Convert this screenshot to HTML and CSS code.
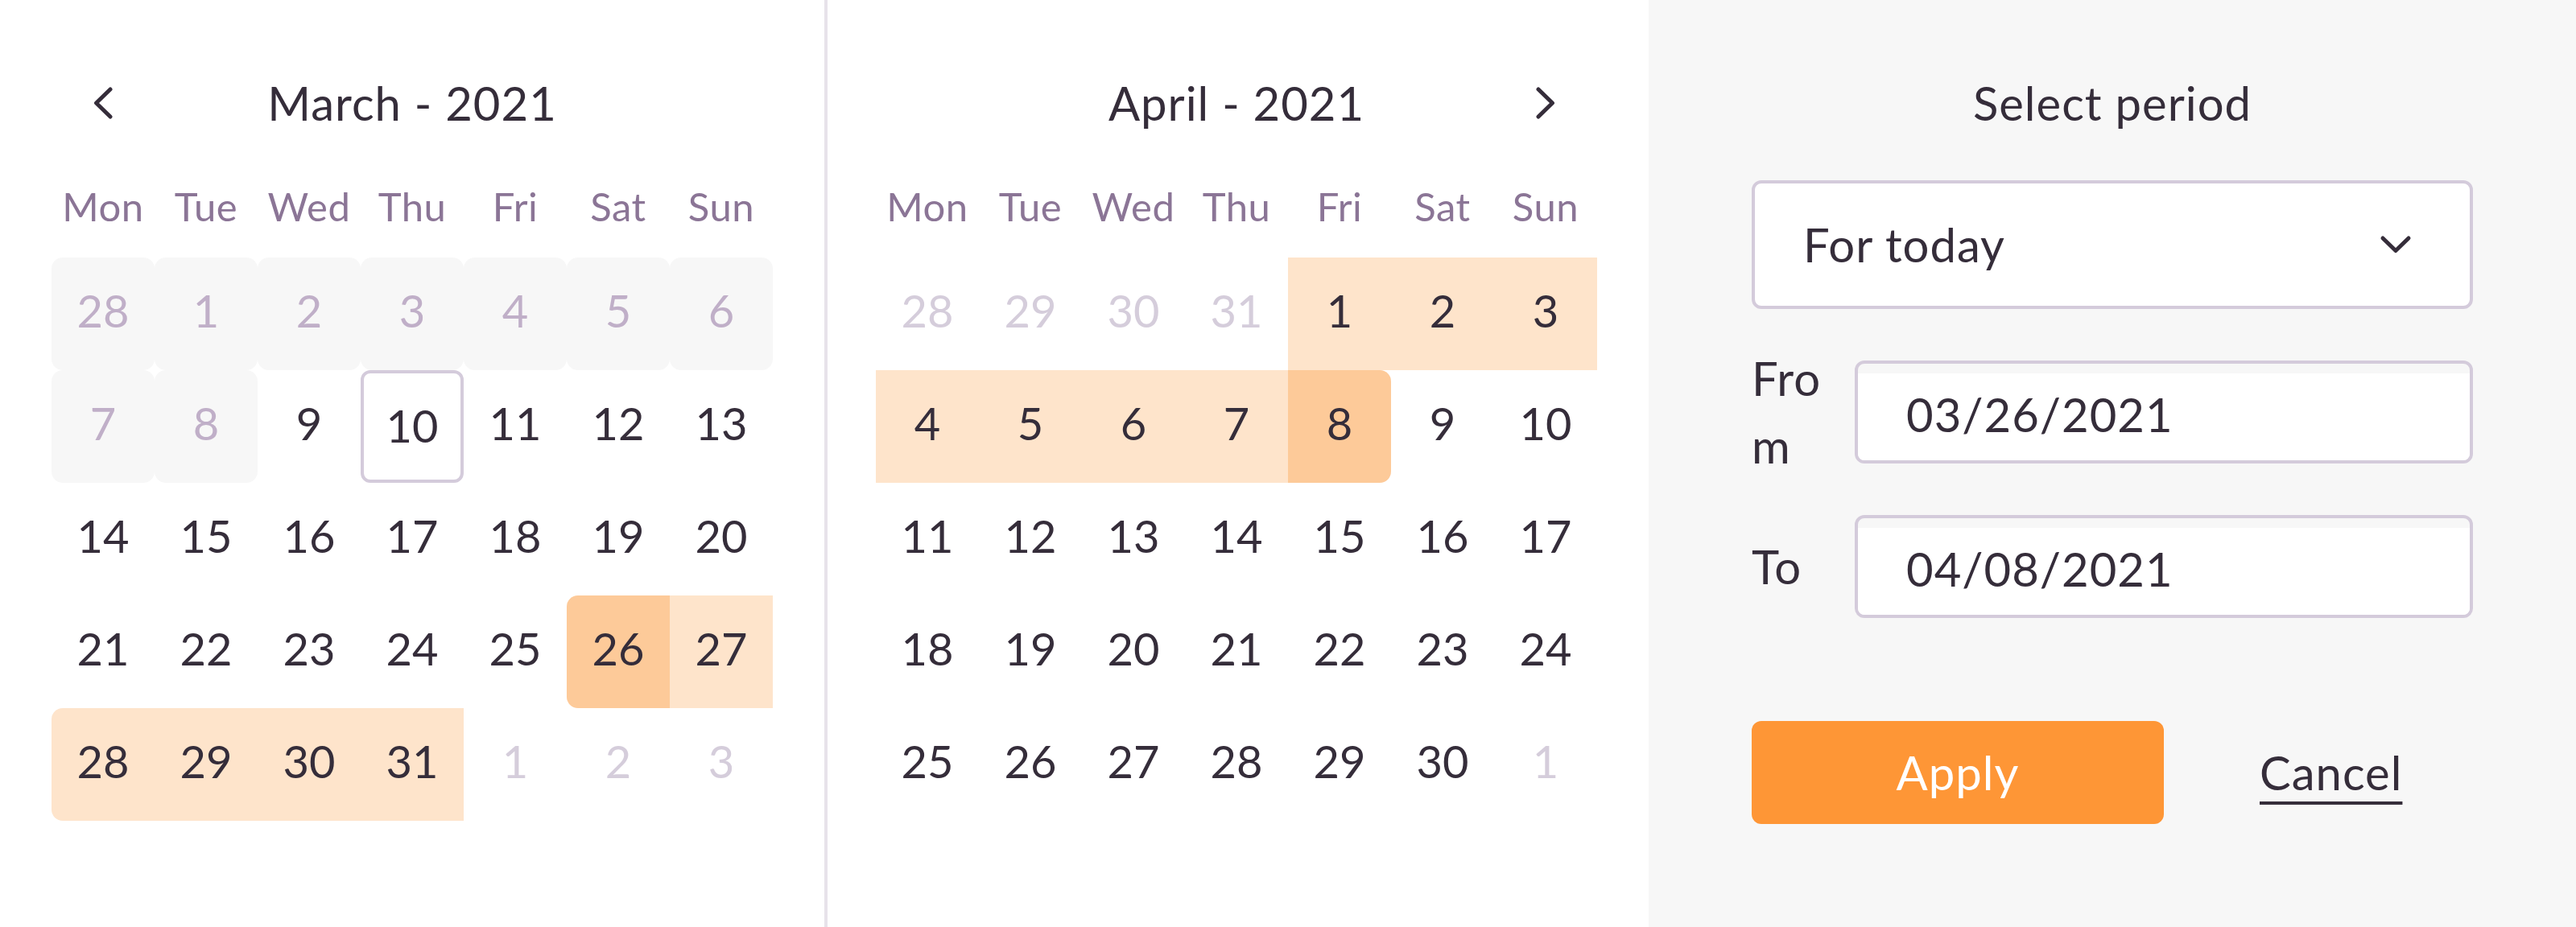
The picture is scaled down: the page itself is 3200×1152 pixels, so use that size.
FILE: index.html
```html
<!DOCTYPE html>
<html lang="en">
<head>
<meta charset="utf-8">
<title>Date range picker</title>
<link rel="stylesheet" href="styles.css">
</head>
<body>
<div class="picker">
  <section class="cal">
    <div class="cal-head">
      <span class="nav">
        <svg width="24" height="40" viewBox="0 0 24 40"><path d="M21 3 L3.5 20 L21 37" fill="none" stroke="#352d3a" stroke-width="5" stroke-linecap="round" stroke-linejoin="round"/></svg>
      </span>
      <h2 class="cal-title">March - 2021</h2>
      <span class="nav"></span>
    </div>
    <div class="weekdays">
      <span class="weekday">Mon</span><span class="weekday">Tue</span><span class="weekday">Wed</span><span class="weekday">Thu</span><span class="weekday">Fri</span><span class="weekday">Sat</span><span class="weekday">Sun</span>
    </div>
    <div class="days">
      <span class="day day--disabled">28</span>
      <span class="day day--disabled">1</span>
      <span class="day day--disabled">2</span>
      <span class="day day--disabled">3</span>
      <span class="day day--disabled">4</span>
      <span class="day day--disabled">5</span>
      <span class="day day--disabled">6</span>

      <span class="day day--disabled">7</span>
      <span class="day day--disabled">8</span>
      <span class="day">9</span>
      <span class="day day--today">10</span>
      <span class="day">11</span>
      <span class="day">12</span>
      <span class="day">13</span>

      <span class="day">14</span>
      <span class="day">15</span>
      <span class="day">16</span>
      <span class="day">17</span>
      <span class="day">18</span>
      <span class="day">19</span>
      <span class="day">20</span>

      <span class="day">21</span>
      <span class="day">22</span>
      <span class="day">23</span>
      <span class="day">24</span>
      <span class="day">25</span>
      <span class="day day--edge round-left">26</span>
      <span class="day day--range">27</span>

      <span class="day day--range round-left">28</span>
      <span class="day day--range">29</span>
      <span class="day day--range">30</span>
      <span class="day day--range">31</span>
      <span class="day day--muted">1</span>
      <span class="day day--muted">2</span>
      <span class="day day--muted">3</span>
    </div>
  </section>

  <section class="cal cal--second">
    <div class="cal-head">
      <span class="nav"></span>
      <h2 class="cal-title">April - 2021</h2>
      <span class="nav">
        <svg width="24" height="40" viewBox="0 0 24 40"><path d="M3 3 L20.5 20 L3 37" fill="none" stroke="#352d3a" stroke-width="5" stroke-linecap="round" stroke-linejoin="round"/></svg>
      </span>
    </div>
    <div class="weekdays">
      <span class="weekday">Mon</span><span class="weekday">Tue</span><span class="weekday">Wed</span><span class="weekday">Thu</span><span class="weekday">Fri</span><span class="weekday">Sat</span><span class="weekday">Sun</span>
    </div>
    <div class="days">
      <span class="day day--muted">28</span>
      <span class="day day--muted">29</span>
      <span class="day day--muted">30</span>
      <span class="day day--muted">31</span>
      <span class="day day--range">1</span>
      <span class="day day--range">2</span>
      <span class="day day--range">3</span>

      <span class="day day--range">4</span>
      <span class="day day--range">5</span>
      <span class="day day--range">6</span>
      <span class="day day--range">7</span>
      <span class="day day--edge round-right">8</span>
      <span class="day">9</span>
      <span class="day">10</span>

      <span class="day">11</span>
      <span class="day">12</span>
      <span class="day">13</span>
      <span class="day">14</span>
      <span class="day">15</span>
      <span class="day">16</span>
      <span class="day">17</span>

      <span class="day">18</span>
      <span class="day">19</span>
      <span class="day">20</span>
      <span class="day">21</span>
      <span class="day">22</span>
      <span class="day">23</span>
      <span class="day">24</span>

      <span class="day">25</span>
      <span class="day">26</span>
      <span class="day">27</span>
      <span class="day">28</span>
      <span class="day">29</span>
      <span class="day">30</span>
      <span class="day day--muted">1</span>
    </div>
  </section>

  <aside class="side">
    <h2 class="side-title">Select period</h2>
    <div class="select">
      <span>For today</span>
      <svg width="40" height="24" viewBox="0 0 40 24"><path d="M4 4 L20 19.5 L36 4" fill="none" stroke="#352d3a" stroke-width="5" stroke-linecap="round" stroke-linejoin="round"/></svg>
    </div>
    <div class="field">
      <span class="field-label">From</span>
      <div class="date-input"><span class="date-value">03/26/2021</span></div>
    </div>
    <div class="field">
      <span class="field-label">To</span>
      <div class="date-input"><span class="date-value">04/08/2021</span></div>
    </div>
    <div class="actions">
      <button class="apply" type="button">Apply</button>
      <a class="cancel" href="#">Cancel</a>
    </div>
  </aside>
</div>
</body>
</html>
```

FILE: styles.css
```css
* {
  box-sizing: border-box;
  margin: 0;
  padding: 0;
}

html,
body {
  width: 3200px;
  height: 1152px;
}

body {
  font-family: Lato, "Noto Sans", sans-serif;
  color: #352d3a;
  background: #ffffff;
  overflow: hidden;
}

.picker {
  display: flex;
  height: 1152px;
}

/* Calendar panels */
.cal {
  width: 1024px;
  flex-shrink: 0;
  padding: 64px 64px 0;
  background: #ffffff;
}

.cal--second {
  border-left: 4px solid #e7e2ea;
  padding-left: 60px;
}

.cal-head {
  display: grid;
  grid-template-columns: 128px 1fr 128px;
  height: 128px;
  align-items: center;
}

.cal-title {
  text-align: center;
  font-size: 58px;
  letter-spacing: 1px;
  font-weight: 400;
  line-height: 1;
}

.nav {
  display: flex;
  justify-content: center;
  align-items: center;
}

.weekdays {
  display: grid;
  grid-template-columns: repeat(7, 128px);
  height: 128px;
  align-items: center;
}

.weekday {
  text-align: center;
  font-size: 49px;
  letter-spacing: 0.5px;
  line-height: 1;
  color: #8b7596;
}

.days {
  display: grid;
  grid-template-columns: repeat(7, 128px);
  grid-auto-rows: 140px;
}

.day {
  display: flex;
  align-items: center;
  justify-content: center;
  padding-bottom: 8px;
  font-size: 56px;
  line-height: 1;
  color: #352d3a;
}

.day--disabled {
  background: #f7f7f7;
  color: #c0afc8;
  border-radius: 14px;
}

.day--muted {
  color: #d5cddb;
}

.day--today {
  border: 4px solid #d4cbdb;
  border-radius: 12px;
  padding-bottom: 2px;
}

.day--range {
  background: #fee4cb;
}

.day--edge {
  background: #fdca99;
}

.round-left {
  border-radius: 14px 0 0 14px;
}

.round-right {
  border-radius: 0 14px 14px 0;
}

/* Side panel */
.side {
  flex: 1;
  background: #f7f7f7;
  padding: 64px 128px 0;
  display: flex;
  flex-direction: column;
}

.side-title {
  height: 128px;
  display: flex;
  align-items: center;
  justify-content: center;
  font-size: 58px;
  letter-spacing: 1px;
  font-weight: 400;
  line-height: 1;
}

.select {
  margin-top: 32px;
  height: 160px;
  border: 4px solid #d4cbdb;
  border-radius: 12px;
  background: #ffffff;
  display: flex;
  align-items: center;
  justify-content: space-between;
  padding: 0 72px 0 60px;
  font-size: 58px;
  letter-spacing: 1px;
  line-height: 1;
}

.select svg {
  display: block;
}

.field {
  display: flex;
  align-items: center;
  height: 128px;
  margin-top: 64px;
}

.field-label {
  flex-shrink: 0;
  width: 96px;
  margin-right: 32px;
  font-size: 58px;
  letter-spacing: 1px;
  line-height: 84px;
  overflow-wrap: anywhere;
}

.date-input {
  flex: 1;
  height: 128px;
  border: 4px solid #d4cbdb;
  border-radius: 12px;
  background: #f7f7f7;
  padding-top: 12px;
}

.date-value {
  height: 100%;
  background: #ffffff;
  border-radius: 0 0 8px 8px;
  display: flex;
  align-items: center;
  padding: 0 0 6px 60px;
  font-size: 58px;
  letter-spacing: 1px;
  line-height: 1;
}

.actions {
  margin-top: 128px;
  display: flex;
  align-items: center;
}

.apply {
  width: 512px;
  height: 128px;
  border: none;
  border-radius: 12px;
  background: #fe9636;
  color: #ffffff;
  font-family: inherit;
  font-size: 58px;
  letter-spacing: 1px;
  line-height: 1;
}

.cancel {
  margin-left: 119px;
  font-size: 58px;
  letter-spacing: 1px;
  line-height: 1;
  color: #352d3a;
  text-decoration: underline;
  text-decoration-thickness: 4px;
  text-underline-offset: 14px;
}
```
